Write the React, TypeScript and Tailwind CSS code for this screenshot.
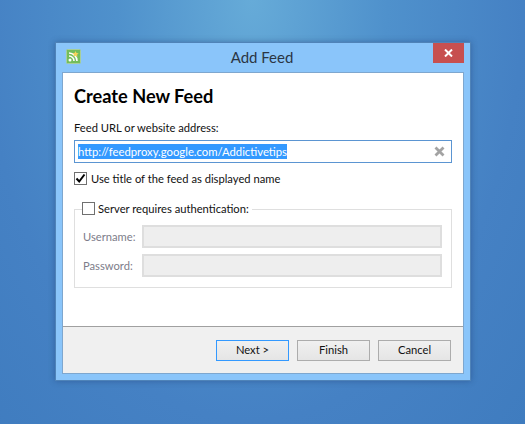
import React from "react";

function Check({ checked }: { checked?: boolean }) {
  return (
    <span className="flex h-[13px] w-[13px] shrink-0 items-center justify-center border border-[#707070] bg-white">
      {checked && (
        <svg width="11" height="11" viewBox="0 0 11 11">
          <path d="M1.5 5.5 L4.2 8.5 L9.5 1.5" fill="none" stroke="#000" strokeWidth="2" />
        </svg>
      )}
    </span>
  );
}

function Btn({ label, focus }: { label: string; focus?: boolean }) {
  return (
    <div
      className={`flex h-[21px] w-[73px] items-center justify-center border bg-gradient-to-b from-[#f0f0f0] to-[#e5e5e5] text-[11.2px] text-[#111] ${
        focus ? "border-[#3399ff]" : "border-[#acacac]"
      }`}
    >
      {label}
    </div>
  );
}

function Field({ label }: { label: string }) {
  return (
    <div className="flex h-[23px] items-center">
      <span className="w-[67px] shrink-0 pl-[8px] text-[11.2px] leading-none text-[#7d7d8a]">{label}</span>
      <div className="h-[23px] w-[300px] border-2 border-[#dedede] bg-[#eeeeee]" />
    </div>
  );
}

export default function App() {
  return (
    <div
      className="h-[424px] w-[525px] overflow-hidden bg-[radial-gradient(ellipse_at_48%_0%,#66abd8_0%,#4f91cc_35%,#4581c4_70%,#3f7cbf_100%)] pl-[55px] pt-[42px]"
      style={{ fontFamily: 'Lato, "Noto Sans", sans-serif' }}
    >
      <div className="flex h-[339px] w-[416px] flex-col border border-[#4f83b8] bg-[#8ac5fa] shadow-[0_0_6px_rgba(30,60,110,0.45)]">
        <div className="relative flex h-[29px] shrink-0 items-center justify-center pr-[2px]">
          <svg className="absolute left-[10px] top-[6px]" width="15" height="15" viewBox="0 0 15 15">
            <rect x="0.5" y="0.5" width="14" height="14" rx="1" fill="#73bd5c" stroke="#a7cf9a" />
            <circle cx="4" cy="11" r="1.5" fill="#fff" />
            <path d="M3 7 A5 5 0 0 1 8 12 M3 4 A8 8 0 0 1 11 12" fill="none" stroke="#fff" strokeWidth="1.6" />
            <path d="M9.5 2 L10.5 4 L12.7 4.2 L11 5.7 L11.6 7.8 L9.5 6.7 L7.6 7.8 L8 5.7 L6.4 4.2 L8.6 4 Z" fill="#f7d35a" />
          </svg>
          <span className="text-[15px] leading-none text-[#2b3644]">Add Feed</span>
          <div className="absolute right-[6px] top-0 flex h-5 w-[31px] items-center justify-center bg-[#c75050]">
            <svg width="9" height="8" viewBox="0 0 9 8">
              <path d="M1 0.5 L8 7.5 M8 0.5 L1 7.5" stroke="#fff" strokeWidth="2" />
            </svg>
          </div>
        </div>
        <div className="mx-[6px] flex min-h-0 flex-1 flex-col border border-[#7ea7cf] bg-white">
          <div className="flex flex-1 flex-col px-[11px] pt-[11px]">
            <h1 className="text-[18.2px] font-bold leading-[24px] text-black">Create New Feed</h1>
            <div className="mt-[12px] text-[11.2px] leading-[16px] text-[#111]">Feed URL or website address:</div>
            <div className="mt-[4px] flex h-[23px] w-[378px] items-center justify-between border border-[#5b95d2] pl-[3px] pr-[6px]">
              <span className="bg-[#3399ff] text-[11.3px] leading-[15px] text-white">http://feedproxy.google.com/Addictivetips</span>
              <svg width="11" height="11" viewBox="0 0 11 11">
                <path d="M1.5 1.5 L9.5 9.5 M9.5 1.5 L1.5 9.5" stroke="#a3a3a3" strokeWidth="2.8" />
              </svg>
            </div>
            <label className="mt-[9px] flex items-center gap-[4px] text-[11.2px] leading-[13px] text-[#111]">
              <Check checked />
              Use title of the feed as displayed name
            </label>
            <div className="relative mt-[24px] flex h-[79px] w-[378px] flex-col gap-[6px] border border-[#dfdfdf] pt-[15px]">
              <div className="absolute left-[7px] top-[-8px] flex items-center gap-[3px] bg-white pr-[3px] text-[11.2px] leading-[13px] text-[#111]">
                <Check />
                Server requires authentication:
              </div>
              <Field label="Username:" />
              <Field label="Password:" />
            </div>
          </div>
          <div className="flex h-[47px] shrink-0 items-start justify-end gap-[8px] border-t border-[#a0a0a0] bg-[#f0f0f0] pr-[12px] pt-[13px]">
            <Btn label="Next >" focus />
            <Btn label="Finish" />
            <Btn label="Cancel" />
          </div>
        </div>
        <div className="h-[6px] shrink-0" />
      </div>
    </div>
  );
}
